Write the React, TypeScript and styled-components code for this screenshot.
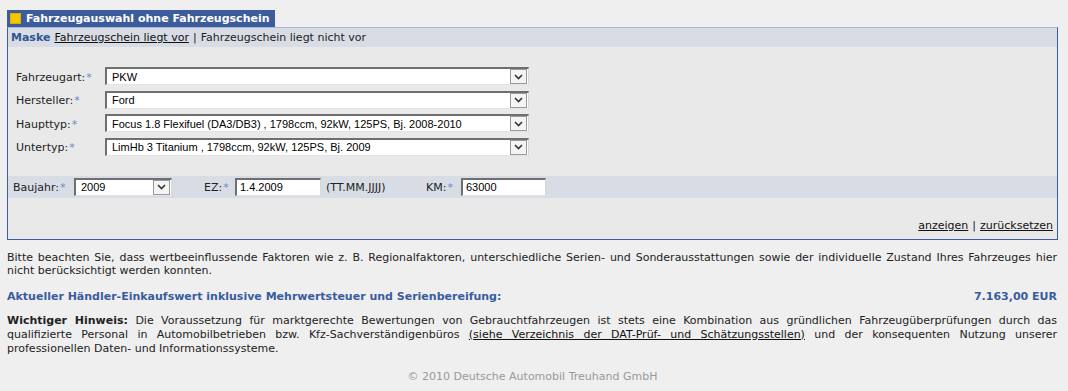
import styled, { createGlobalStyle } from 'styled-components';

const GlobalStyle = createGlobalStyle`
  html, body {
    margin: 0;
    padding: 0;
    background: #efefef;
  }
  body {
    font-family: 'DejaVu Sans', Verdana, sans-serif;
    font-size: 11px;
    color: #222;
  }
`;

interface Field {
  label: string;
  value: string;
}

const fields: Field[] = [
  { label: 'Fahrzeugart:', value: 'PKW' },
  { label: 'Hersteller:', value: 'Ford' },
  { label: 'Haupttyp:', value: 'Focus 1.8 Flexifuel (DA3/DB3) , 1798ccm, 92kW, 125PS, Bj. 2008-2010' },
  { label: 'Untertyp:', value: 'LimHb 3 Titanium , 1798ccm, 92kW, 125PS, Bj. 2009' },
];

const Chevron = () => (
  <svg width="9" height="6" viewBox="0 0 9 6">
    <path d="M1 1 L4.5 4.5 L8 1" fill="none" stroke="#333" strokeWidth="1.6" />
  </svg>
);

const Dropdown = ({ value, width }: { value: string; width: number }) => (
  <SelectBox $width={width}>
    <SelectText>{value}</SelectText>
    <ArrowButton>
      <Chevron />
    </ArrowButton>
  </SelectBox>
);

const Required = () => <Star>*</Star>;

const App = () => {
  return (
    <>
      <GlobalStyle />
      <Page>
        <Tab>
          <TabIcon />
          Fahrzeugauswahl ohne Fahrzeugschein
        </Tab>
        <Panel>
          <MaskBar>
            <MaskLabel>Maske</MaskLabel>
            <Link>Fahrzeugschein liegt vor</Link>
            <span>|</span>
            <span>Fahrzeugschein liegt nicht vor</span>
          </MaskBar>

          <Fields>
            {fields.map((f) => (
              <FieldRow key={f.label}>
                <FieldLabel>
                  {f.label}
                  <Required />
                </FieldLabel>
                <Dropdown value={f.value} width={424} />
              </FieldRow>
            ))}
          </Fields>

          <DateBar>
            <InlineLabel $width={61}>
              Baujahr:
              <Required />
            </InlineLabel>
            <Dropdown value="2009" width={98} />
            <InlineLabel $width={31} $gap={32}>
              EZ:
              <Required />
            </InlineLabel>
            <TextInput $width={86}>1.4.2009</TextInput>
            <Hint>(TT.MM.JJJJ)</Hint>
            <InlineLabel $width={35}>
              KM:
              <Required />
            </InlineLabel>
            <TextInput $width={85}>63000</TextInput>
          </DateBar>

          <Actions>
            <Link>anzeigen</Link>
            <span>|</span>
            <Link>zurücksetzen</Link>
          </Actions>
        </Panel>

        <Notice>
          <Line>
            Bitte beachten Sie, dass wertbeeinflussende Faktoren wie z. B. Regionalfaktoren, unterschiedliche
            Serien- und Sonderausstattungen sowie der individuelle Zustand Ihres Fahrzeuges hier
          </Line>
          <span>nicht berücksichtigt werden konnten.</span>
        </Notice>

        <ValueRow>
          <span>Aktueller Händler-Einkaufswert inklusive Mehrwertsteuer und Serienbereifung:</span>
          <span>7.163,00 EUR</span>
        </ValueRow>

        <Hinweis>
          <Line>
            <strong>Wichtiger Hinweis:</strong> Die Voraussetzung für marktgerechte Bewertungen von
            Gebrauchtfahrzeugen ist stets eine Kombination aus gründlichen Fahrzeugüberprüfungen durch das
          </Line>
          <Line>
            qualifizierte Personal in Automobilbetrieben bzw. Kfz-Sachverständigenbüros{' '}
            <Link>(siehe Verzeichnis der DAT-Prüf- und Schätzungsstellen)</Link> und der konsequenten
            Nutzung unserer
          </Line>
          <span>professionellen Daten- und Informationssysteme.</span>
        </Hinweis>

        <Footer>© 2010 Deutsche Automobil Treuhand GmbH</Footer>
      </Page>
    </>
  );
};

const Page = styled.div`
  padding: 10px 10px 0 7px;
`;

const Tab = styled.div`
  display: inline-flex;
  align-items: center;
  gap: 5px;
  height: 17px;
  width: 268px;
  box-sizing: border-box;
  padding-left: 3px;
  background: #3d5c9c;
  color: #fff;
  font-weight: bold;
  font-size: 11px;
`;

const TabIcon = styled.span`
  width: 9px;
  height: 9px;
  background: #f3c700;
  border: 1px solid #e0b000;
`;

const Panel = styled.div`
  border: 1px solid #3d5c9c;
  border-top-color: #a9b9d9;
  background: #e9e9e9;
`;

const MaskBar = styled.div`
  display: flex;
  align-items: center;
  gap: 4px;
  height: 19px;
  padding-left: 3px;
  background: #d8dde5;
  font-size: 11px;
`;

const MaskLabel = styled.span`
  font-weight: bold;
  color: #2e5597;
`;

const Link = styled.span`
  text-decoration: underline;
  color: #111;
`;

const Fields = styled.div`
  display: flex;
  flex-direction: column;
  gap: 5.5px;
  padding: 20px 0 0 8px;
`;

const FieldRow = styled.div`
  display: flex;
  align-items: center;
`;

const FieldLabel = styled.span`
  width: 89px;
  padding-top: 2px;
`;

const Star = styled.span`
  margin-left: 1px;
  color: #6a8cc8;
`;

const SelectBox = styled.div<{ $width: number }>`
  display: flex;
  align-items: center;
  box-sizing: border-box;
  width: ${(p) => p.$width}px;
  height: 18px;
  background: #fff;
  border-top: 2px solid #6f6f6f;
  border-left: 2px solid #6f6f6f;
  border-right: 1px solid #d8d8d8;
  border-bottom: 1px solid #e4e4e4;
`;

const SelectText = styled.span`
  flex: 1;
  padding-left: 5px;
  font-family: 'Liberation Sans', Arial, sans-serif;
  font-size: 11px;
  color: #000;
  white-space: nowrap;
  overflow: hidden;
`;

const ArrowButton = styled.span`
  display: flex;
  align-items: center;
  justify-content: center;
  width: 15px;
  height: 13px;
  margin-right: 1px;
  background: #f4f4f4;
  border: 1px solid #9a9a9a;
`;

const DateBar = styled.div`
  display: flex;
  align-items: center;
  height: 22px;
  margin-top: 20px;
  padding-left: 5px;
  background: #d8dde5;
`;

const InlineLabel = styled.span<{ $width: number; $gap?: number }>`
  width: ${(p) => p.$width}px;
  margin-left: ${(p) => p.$gap ?? 0}px;
  padding-top: 1px;
  white-space: nowrap;
`;

const TextInput = styled.span<{ $width: number }>`
  box-sizing: border-box;
  width: ${(p) => p.$width}px;
  height: 18px;
  padding: 1px 0 0 3px;
  background: #fff;
  border-top: 2px solid #6f6f6f;
  border-left: 2px solid #6f6f6f;
  border-right: 1px solid #d8d8d8;
  border-bottom: 1px solid #e4e4e4;
  font-family: 'Liberation Sans', Arial, sans-serif;
  font-size: 11px;
  color: #000;
`;

const Hint = styled.span`
  width: 100px;
  margin-left: 5px;
  padding-top: 1px;
`;

const Actions = styled.div`
  display: flex;
  justify-content: flex-end;
  gap: 4px;
  padding: 21px 4px 6px 0;
  line-height: 14px;
`;

const Line = styled.span`
  display: block;
  text-align: justify;
  text-align-last: justify;
`;

const Notice = styled.p`
  margin: 11px 1px 0 0;
  line-height: 13px;
`;

const ValueRow = styled.div`
  display: flex;
  justify-content: space-between;
  margin-top: 13px;
  padding-right: 1px;
  font-weight: bold;
  color: #3a5c9e;
`;

const Hinweis = styled.p`
  margin: 11px 1px 0 0;
  line-height: 14px;

  strong {
    font-weight: bold;
  }
`;

const Footer = styled.div`
  margin-top: 14px;
  text-align: center;
  color: #999;
`;

export default App;
